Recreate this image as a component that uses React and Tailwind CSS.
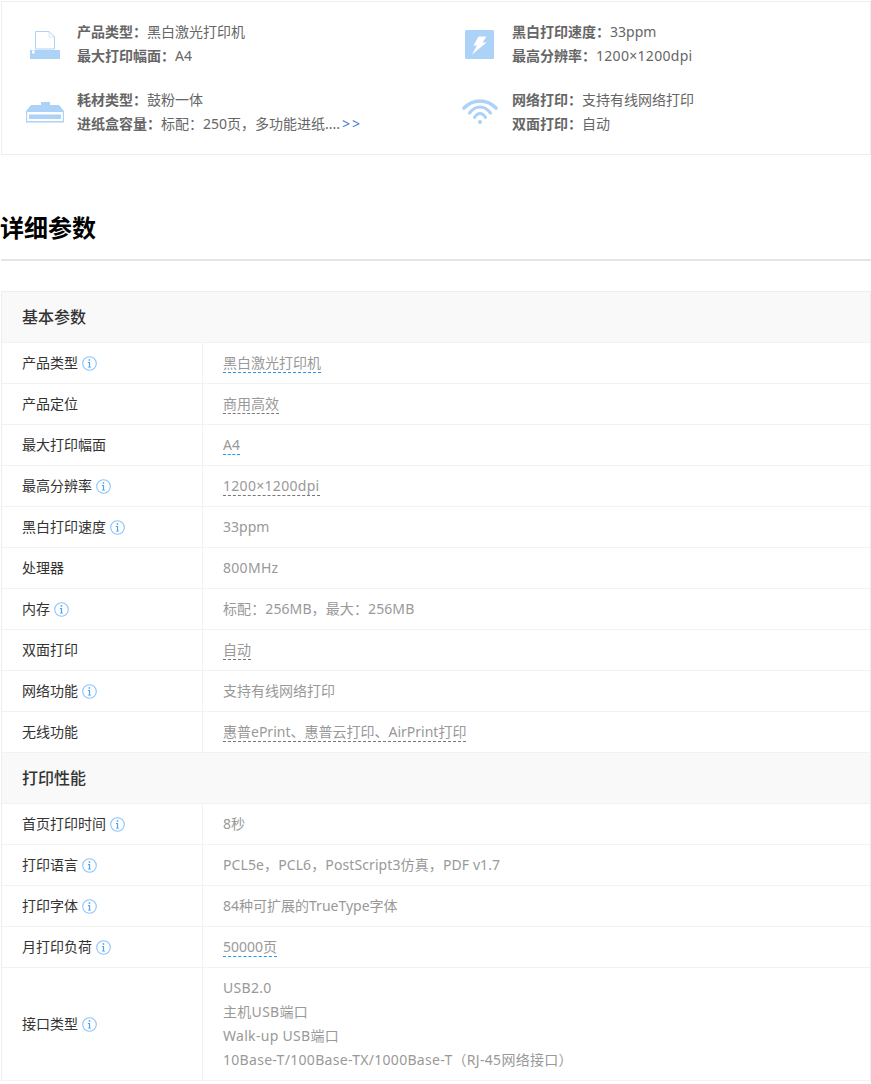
const font = { fontFamily: '"Noto Sans", "Noto Sans CJK SC", sans-serif' };

function Info() {
  return (
    <svg width="15" height="15" viewBox="0 0 15 15" className="ml-[4px] shrink-0">
      <circle cx="7.5" cy="7.5" r="6.8" fill="none" stroke="#8cc4f8" strokeWidth="1.1" />
      <rect x="6.7" y="3.2" width="1.5" height="1.6" fill="#4da3f0" />
      <path d="M5.9 6.1H8.1V10.8H9.1V11.6H5.9V10.8H6.9V6.9H5.9Z" fill="#4da3f0" />
    </svg>
  );
}

const PrinterIcon = () => (
  <svg width="30" height="30" viewBox="0 0 30 30" className="translate-y-px">
    <path d="M5.5 1.5H19L24.5 7V19H5.5Z" fill="#fff" stroke="#acd2f7" strokeWidth="1" />
    <path d="M19 1.5V7H24.5" fill="none" stroke="#acd2f7" strokeWidth="1" strokeDasharray="1 1" />
    <rect x="0" y="20" width="30" height="9" fill="#acd2f7" />
    <rect x="2" y="20.5" width="2.5" height="3" fill="#fff" />
  </svg>
);
const TonerIcon = () => (
  <svg width="38" height="22" viewBox="0 0 38 22">
    <path d="M15 1H24V4H33L38 10V21.5H0V10L5 4H15Z" fill="#acd2f7" />
    <rect x="1.2" y="11" width="35.6" height="9" fill="#fff" />
    <rect x="3" y="13.5" width="32" height="4.5" fill="#acd2f7" />
  </svg>
);
const BoltIcon = () => (
  <svg width="30" height="30" viewBox="0 0 30 30" className="translate-y-px">
    <rect width="29" height="29" rx="1.5" fill="#acd2f7" />
    <path d="M13.5 6.5H21.5L17.5 12.5H21.5L6.8 24.8L12 15.5H8.5Z" fill="#fff" />
  </svg>
);
const WifiIcon = () => (
  <svg width="36" height="26" viewBox="0 0 36 26" fill="none" stroke="#acd2f7" strokeLinecap="round">
    <path d="M2 9C11 -0.3 25 -0.3 34 9" strokeWidth="3.6" />
    <path d="M7.5 14C13.5 6 22.5 6 28.5 14" strokeWidth="3.2" />
    <path d="M12.5 18.5C15.5 13.2 20.5 13.2 23.5 18.5" strokeWidth="3" />
    <circle cx="18" cy="23" r="2.1" fill="#acd2f7" stroke="none" />
  </svg>
);

function Feature({ icon, lines }) {
  return (
    <div className="flex h-12 items-center">
      <div className="flex w-[38px] justify-center shrink-0">{icon}</div>
      <div className="ml-[13px] text-[14px] leading-6 text-[#666]">
        {lines.map(([k, v, more, track]) => (
          <div key={k} className="whitespace-nowrap">
            <span className="font-bold">{k}：</span>
            <span className={track ? "tracking-[0.3px]" : ""}>{v}</span>
            {more && <span className="ml-[2px] text-[#3a78d8] tracking-[2px]">&gt;&gt;</span>}
          </div>
        ))}
      </div>
    </div>
  );
}

const sections = [
  ["基本参数", [
    ["产品类型", true, "黑白激光打印机", "blue"],
    ["产品定位", false, "商用高效", "gray"],
    ["最大打印幅面", false, "A4", "blue"],
    ["最高分辨率", true, "1200×1200dpi", "gray", "tracking-[0.3px]"],
    ["黑白打印速度", true, "33ppm"],
    ["处理器", false, "800MHz", "", "tracking-[0.3px]"],
    ["内存", true, "标配：256MB，最大：256MB", "", "tracking-[0.1px]"],
    ["双面打印", false, "自动", "gray"],
    ["网络功能", true, "支持有线网络打印"],
    ["无线功能", false, "惠普ePrint、惠普云打印、AirPrint打印", "gray"],
  ]],
  ["打印性能", [
    ["首页打印时间", true, "8秒"],
    ["打印语言", true, "PCL5e，PCL6，PostScript3仿真，PDF v1.7", "", "tracking-[0.1px]"],
    ["打印字体", true, "84种可扩展的TrueType字体"],
    ["月打印负荷", true, "50000页", "blue"],
    ["接口类型", true, ["USB2.0", "主机USB端口", "Walk-up USB端口", "10Base-T/100Base-TX/1000Base-T（RJ-45网络接口）"], "", "tracking-[0.3px]"],
  ]],
];

function Value({ v, u, t = "" }) {
  if (Array.isArray(v)) {
    return <div className={`py-2 leading-6 ${t}`}>{v.map((l) => <div key={l}>{l}</div>)}</div>;
  }
  const cls = u === "blue" ? "border-b border-dashed border-b-[#2196f3]" : u === "gray" ? "border-b border-dashed border-b-[#777777]" : "";
  return <span className={`${cls} ${t} leading-[18px] inline-block`}>{v}</span>;
}

export default function App() {
  return (
    <div className="w-[871px] h-[1084px] overflow-hidden bg-white pt-px pl-px" style={font}>
      <div className="w-[870px] h-[154px] border border-[#eeeeee] pt-[18px] pl-[24px]">
        <div className="grid grid-cols-[435px_1fr] gap-y-5">
          <Feature icon={<PrinterIcon />} lines={[["产品类型", "黑白激光打印机"], ["最大打印幅面", "A4"]]} />
          <Feature icon={<BoltIcon />} lines={[["黑白打印速度", "33ppm"], ["最高分辨率", "1200×1200dpi", false, true]]} />
          <Feature icon={<TonerIcon />} lines={[["耗材类型", "鼓粉一体"], ["进纸盒容量", "标配：250页，多功能进纸....", true]]} />
          <Feature icon={<WifiIcon />} lines={[["网络打印", "支持有线网络打印"], ["双面打印", "自动"]]} />
        </div>
      </div>

      <div className="mt-[51px] h-[55px] border-b-2 border-[#e5e5e5] text-[24px] font-bold leading-[44px] text-black w-[870px]">
        <span className="-ml-px">详细参数</span>
      </div>

      <div className="mt-[30px] w-[870px] border border-[#eeeeee] border-b-0">
        {sections.map(([title, rows]) => (
          <div key={title}>
            <div className="h-[51px] bg-[#f9f9f9] pl-5 text-[16px] font-medium leading-[50px] text-[#333] border-b border-[#f2f2f2]">
              {title}
            </div>
            {rows.map(([k, info, v, u, t]) => (
              <div key={k} className="flex min-h-[41px] border-b border-[#f2f2f2]">
                <div className="flex w-[201px] shrink-0 items-center border-r border-[#f2f2f2] pl-5 text-[14px] leading-5 text-[#333]">
                  {k}{info && <Info />}
                </div>
                <div className="flex items-center pl-5 text-[14px] text-[#999]">
                  <Value v={v} u={u} t={t} />
                </div>
              </div>
            ))}
          </div>
        ))}
      </div>
    </div>
  );
}
